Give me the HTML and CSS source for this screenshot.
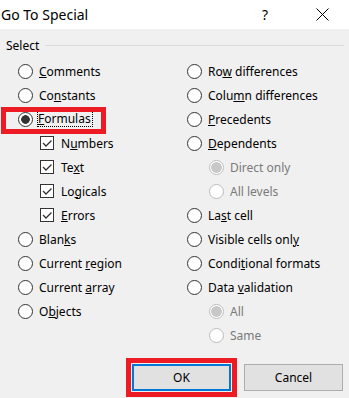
FILE: index.html
```html
<!DOCTYPE html>
<html>
<head>
<meta charset="utf-8">
<link rel="stylesheet" href="styles.css">
</head>
<body>
<div class="dialog">
  <div class="titlebar">
    <span class="title">Go To Special</span>
    <span class="help">?</span>
    <svg class="close" width="13" height="13" viewBox="0 0 13 13"><path d="M0.5 0.5 L12.5 12.5 M12.5 0.5 L0.5 12.5" stroke="#000" stroke-width="1" fill="none"/></svg>
  </div>
  <div class="content">
    <div class="group-label"><span>Select</span><span class="rule"></span></div>
    <div class="columns">
      <div class="col left">
        <div class="row"><span class="radio"></span><span><u>C</u>omments</span></div>
        <div class="row"><span class="radio"></span><span>Co<u>n</u>stants</span></div>
        <div class="row marked"><span class="radio checked"></span><span class="focus"><u>F</u>ormulas</span><span class="redbox"></span></div>
        <div class="row sub"><span class="check"><svg width="12" height="12" viewBox="0 0 12 12"><path d="M2 6 L5 9 L10.5 3.5" stroke="#333" stroke-width="1.3" fill="none"/></svg></span><span>N<u>u</u>mbers</span></div>
        <div class="row sub"><span class="check"><svg width="12" height="12" viewBox="0 0 12 12"><path d="M2 6 L5 9 L10.5 3.5" stroke="#333" stroke-width="1.3" fill="none"/></svg></span><span>Te<u>x</u>t</span></div>
        <div class="row sub"><span class="check"><svg width="12" height="12" viewBox="0 0 12 12"><path d="M2 6 L5 9 L10.5 3.5" stroke="#333" stroke-width="1.3" fill="none"/></svg></span><span>Lo<u>g</u>icals</span></div>
        <div class="row sub"><span class="check"><svg width="12" height="12" viewBox="0 0 12 12"><path d="M2 6 L5 9 L10.5 3.5" stroke="#333" stroke-width="1.3" fill="none"/></svg></span><span><u>E</u>rrors</span></div>
        <div class="row"><span class="radio"></span><span>Blan<u>k</u>s</span></div>
        <div class="row"><span class="radio"></span><span>Current <u>r</u>egion</span></div>
        <div class="row"><span class="radio"></span><span>Current <u>a</u>rray</span></div>
        <div class="row"><span class="radio"></span><span>O<u>b</u>jects</span></div>
      </div>
      <div class="col right">
        <div class="row"><span class="radio"></span><span>Ro<u>w</u> differences</span></div>
        <div class="row"><span class="radio"></span><span>Colu<u>m</u>n differences</span></div>
        <div class="row"><span class="radio"></span><span><u>P</u>recedents</span></div>
        <div class="row"><span class="radio"></span><span><u>D</u>ependents</span></div>
        <div class="row sub disabled"><span class="radio checked"></span><span>Direct only</span></div>
        <div class="row sub disabled"><span class="radio"></span><span>All levels</span></div>
        <div class="row"><span class="radio"></span><span>La<u>s</u>t cell</span></div>
        <div class="row"><span class="radio"></span><span>Visible cells onl<u>y</u></span></div>
        <div class="row"><span class="radio"></span><span>Condi<u>t</u>ional formats</span></div>
        <div class="row"><span class="radio"></span><span>Data <u>v</u>alidation</span></div>
        <div class="row sub disabled"><span class="radio checked"></span><span>All</span></div>
        <div class="row sub disabled"><span class="radio"></span><span>Same</span></div>
      </div>
    </div>
    <div class="buttons">
      <button class="btn primary">OK</button>
      <button class="btn">Cancel</button>
    </div>
  </div>
</div>
</body>
</html>
```

FILE: styles.css
```css
html, body {
  margin: 0;
  padding: 0;
}
body {
  width: 349px;
  height: 398px;
  overflow: hidden;
  font-family: "Noto Sans", "Open Sans", sans-serif;
  font-size: 12px;
  color: #000;
  background: #f0f0f0;
}
.dialog {
  width: 349px;
  height: 398px;
  display: flex;
  flex-direction: column;
  background: #f0f0f0;
}
.titlebar {
  height: 29px;
  background: #fff;
  display: flex;
  align-items: center;
  padding: 0 20px 0 1px;
  box-sizing: border-box;
}
.title {
  font-size: 14px;
  line-height: 29px;
  flex: 1;
}
.help {
  font-size: 14px;
  width: 54px;
  line-height: 29px;
}
.close {
  display: block;
  margin-top: -1px;
}
.content {
  display: flex;
  flex-direction: column;
}
.group-label {
  display: flex;
  align-items: center;
  height: 24px;
  margin-top: 4px;
  padding: 0 5px 0 6px;
}
.rule {
  flex: 1;
  height: 1px;
  background: #dcdcdc;
  margin-left: 6px;
}
.columns {
  display: grid;
  grid-template-columns: 187px 1fr;
  margin-top: 2px;
}
.col.left {
  padding-left: 18px;
}
.row {
  height: 24px;
  display: flex;
  align-items: center;
  gap: 6px;
  white-space: nowrap;
}
.row.sub {
  padding-left: 22px;
}
.row.marked {
  position: relative;
  gap: 4px;
}
.radio {
  width: 15px;
  height: 15px;
  box-sizing: border-box;
  border: 1px solid #333;
  border-radius: 50%;
  background: #fff;
  flex: none;
}
.radio.checked {
  background: radial-gradient(circle, #333 0 4px, #fff 4.6px);
}
.disabled {
  color: #7a7a7a;
}
.disabled .radio {
  border-color: #bcbcbc;
}
.disabled .radio.checked {
  background: radial-gradient(circle, #c8c8c8 0 5px, #fff 5.6px);
}
.check {
  width: 14px;
  height: 14px;
  box-sizing: border-box;
  border: 1px solid #333;
  background: #fff;
  flex: none;
  display: flex;
  align-items: center;
  justify-content: center;
  margin-right: 1px;
}
.check svg {
  display: block;
}
.focus {
  border: 1px dotted #000;
  line-height: 14px;
  padding: 0 1px 0 0;
}
.redbox {
  position: absolute;
  left: -17px;
  top: 0;
  width: 105px;
  height: 27px;
  box-sizing: border-box;
  border: 5px solid #ed1c24;
}
.buttons {
  display: flex;
  justify-content: flex-end;
  gap: 13px;
  padding-right: 6px;
  margin-top: 17px;
}
.btn {
  width: 99px;
  height: 27px;
  box-sizing: border-box;
  border: 1px solid #adadad;
  background: #e1e1e1;
  font-family: "Noto Sans", "Open Sans", sans-serif;
  font-size: 12px;
  color: #000;
  padding: 0;
  margin: 0;
}
.btn.primary {
  border: 2px solid #0078d7;
  outline: 5px solid #ed1c24;
  outline-offset: 1px;
}
```
